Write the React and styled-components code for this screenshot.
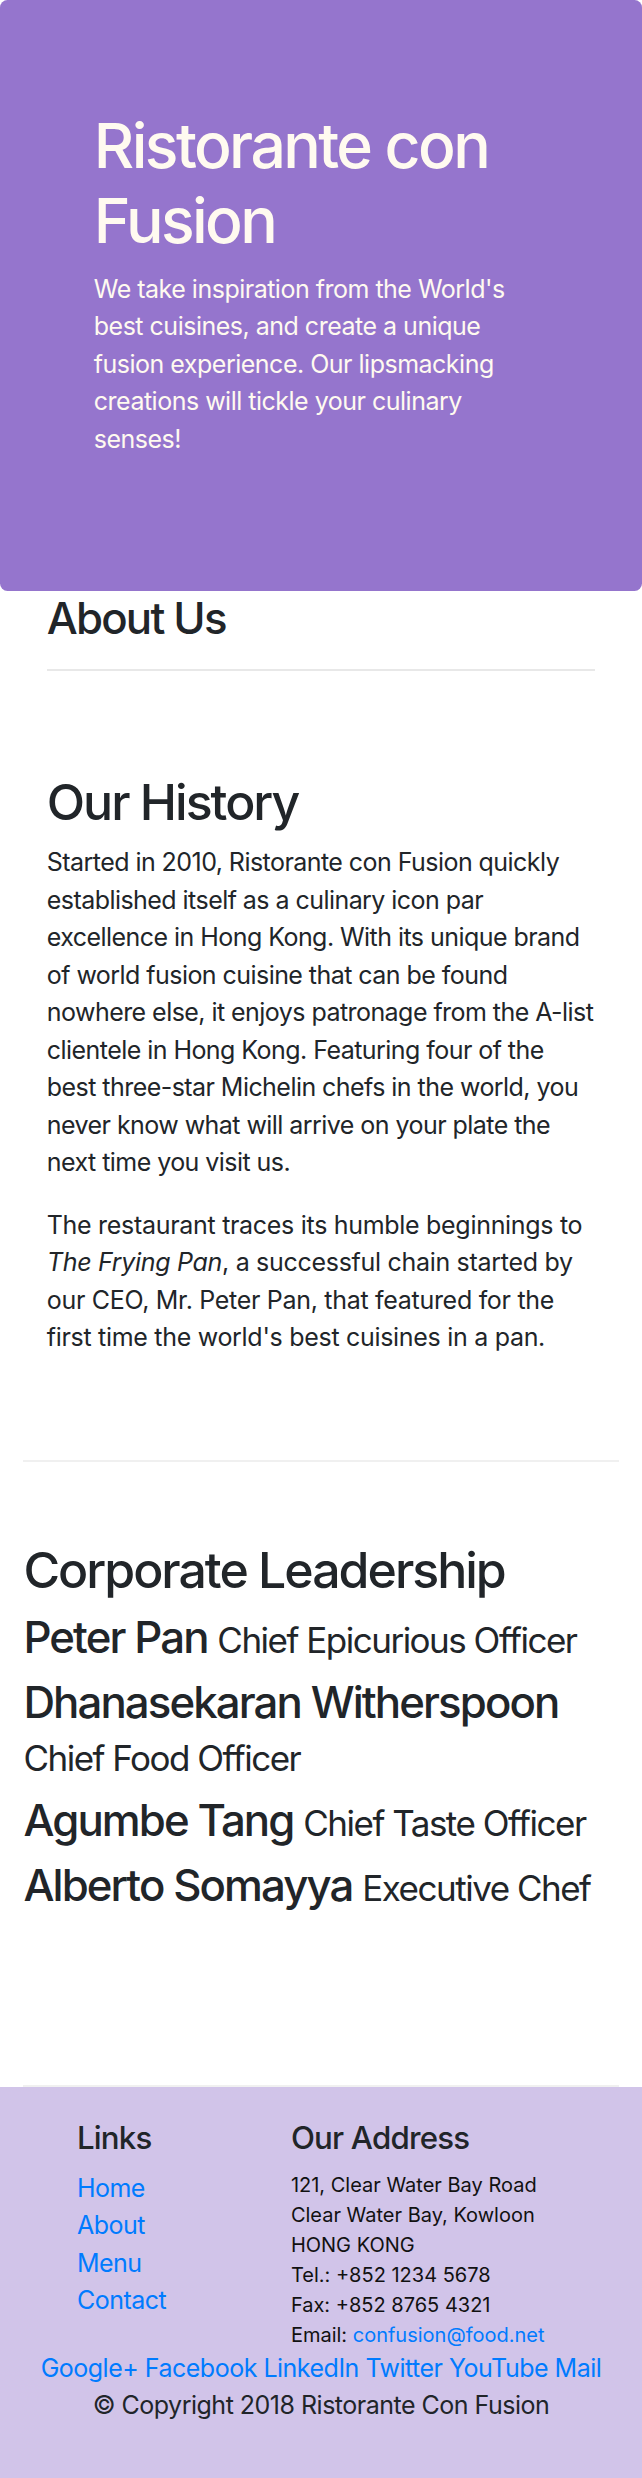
import React from 'react'
import styled, { createGlobalStyle } from 'styled-components'

const leaders = [
    { name: 'Peter Pan', designation: 'Chief Epicurious Officer' },
    { name: 'Dhanasekaran Witherspoon', designation: 'Chief Food Officer' },
    { name: 'Agumbe Tang', designation: 'Chief Taste Officer' },
    { name: 'Alberto Somayya', designation: 'Executive Chef' },
]

const socials = ['Google+', 'Facebook', 'LinkedIn', 'Twitter', 'YouTube', 'Mail']

function App() {
    return (
        <>
            <GlobalStyle />
            <Jumbotron>
                <Container>
                    <HeaderRow>
                        <Col>
                            <Title>Ristorante con Fusion</Title>
                            <Lead>
                                We take inspiration from the World's best cuisines, and create a unique
                                fusion experience. Our lipsmacking creations will tickle your culinary senses!
                            </Lead>
                        </Col>
                    </HeaderRow>
                </Container>
            </Jumbotron>

            <Container>
                <HeaderRow>
                    <Col>
                        <SectionTitle>About Us</SectionTitle>
                        <Rule />
                    </Col>
                </HeaderRow>

                <ContentRow>
                    <Col>
                        <Heading>Our History</Heading>
                        <Text $tracking={-0.55}>
                            Started in 2010, Ristorante con Fusion quickly established itself as a culinary
                            icon par excellence in Hong Kong. With its unique brand of world fusion cuisine
                            that can be found nowhere else, it enjoys patronage from the A-list clientele in
                            Hong Kong. Featuring four of the best three-star Michelin chefs in the world, you
                            never know what will arrive on your plate the next time you visit us.
                        </Text>
                        <Text $tracking={-0.3}>
                            The restaurant traces its humble beginnings to <em>The Frying Pan</em>, a successful
                            chain started by our CEO, Mr. Peter Pan, that featured for the first time the
                            world's best cuisines in a pan.
                        </Text>
                    </Col>
                </ContentRow>

                <ContentRow>
                    <Block>
                        <Heading>Corporate Leadership</Heading>
                        {leaders.map((leader) => (
                            <Leader key={leader.name}>
                                {leader.name} <small>{leader.designation}</small>
                            </Leader>
                        ))}
                    </Block>
                </ContentRow>
            </Container>

            <Footer>
                <Container>
                    <FooterRow>
                        <FooterCol $offset={8.3333} $width={33.3333}>
                            <FooterTitle>Links</FooterTitle>
                            <LinkList>
                                <li><Link href="#">Home</Link></li>
                                <li><Link href="#">About</Link></li>
                                <li><Link href="#">Menu</Link></li>
                                <li><Link href="#">Contact</Link></li>
                            </LinkList>
                        </FooterCol>
                        <FooterCol $width={58.3333}>
                            <FooterTitle>Our Address</FooterTitle>
                            <Address>
                                121, Clear Water Bay Road<br />
                                Clear Water Bay, Kowloon<br />
                                HONG KONG<br />
                                Tel.: +852 1234 5678<br />
                                Fax: +852 8765 4321<br />
                                Email: <Link href="#">confusion@food.net</Link>
                            </Address>
                        </FooterCol>
                        <FooterCol $width={100} $center>
                            {socials.map((s, i) => (
                                <React.Fragment key={s}>
                                    <Link href="#">{s}</Link>{i < socials.length - 1 ? ' ' : ''}
                                </React.Fragment>
                            ))}
                        </FooterCol>
                    </FooterRow>
                    <FooterRow>
                        <FooterCol $width={100} $center>
                            <Copyright>© Copyright 2018 Ristorante Con Fusion</Copyright>
                        </FooterCol>
                    </FooterRow>
                </Container>
            </Footer>
        </>
    )
}

export default App

const GlobalStyle = createGlobalStyle`
    *, *::before, *::after { box-sizing: border-box; }
    body {
        margin: 0;
        font-family: Inter, "Noto Sans", sans-serif;
        font-size: 25px;
        line-height: 1.5;
        letter-spacing: -0.5px;
        color: #212529;
        background: #fff;
    }
`

const Jumbotron = styled.header`
    background-color: #9575cd;
    color: floralwhite;
    padding: 108px 47px;
    border-radius: 7.5px;
`
const Container = styled.div`
    padding: 0 23.4px;
`
const HeaderRow = styled.div`
    display: flex;
    flex-wrap: wrap;
    margin: 0;
`
const Col = styled.div`
    flex: 0 0 100%;
    padding: 0 23.4px;
`
const Title = styled.h1`
    font-size: 62.5px;
    font-weight: 500;
    line-height: 1.2;
    letter-spacing: -2.6px;
    margin: 0 0 12.5px;
`
const Lead = styled.p`
    margin: 0 0 25px;
`
const SectionTitle = styled.h3`
    font-size: 43.75px;
    font-weight: 500;
    line-height: 1.2;
    letter-spacing: -1.8px;
    margin: 2px 0 12.5px;
`
const Rule = styled.hr`
    border: 0;
    border-top: 2px solid #e8e8e8;
    margin: 23px 0;
`
const ContentRow = styled.div`
    display: flex;
    flex-wrap: wrap;
    margin: 0;
    padding: 78px 0;
    border-bottom: 2px solid #f0f0f0;
    min-height: 625px;
`
const Block = styled.div`
    flex: 0 0 100%;
`
const Heading = styled.h2`
    font-size: 50px;
    font-weight: 500;
    line-height: 1.2;
    letter-spacing: -2px;
    margin: 0 0 12.5px;
`
const Text = styled.p`
    margin: 0 0 25px;
    letter-spacing: ${(p) => p.$tracking}px;
`
const Leader = styled.h3`
    font-size: 43.75px;
    font-weight: 500;
    line-height: 1.2;
    letter-spacing: -1.9px;
    margin: 0 0 12.5px;

    > small {
        font-size: 80%;
        font-weight: 400;
        letter-spacing: -1.5px;
    }
`
const Footer = styled.footer`
    background-color: #d1c4e9;
    padding: 33px 0 32px;
`
const FooterRow = styled.div`
    display: flex;
    flex-wrap: wrap;
    justify-content: center;
    margin: 0 -23.4px;
`
const FooterCol = styled.div`
    flex: 0 0 ${(p) => p.$width}%;
    max-width: ${(p) => p.$width}%;
    margin-left: ${(p) => p.$offset || 0}%;
    padding: 0 23.4px;
    text-align: ${(p) => (p.$center ? 'center' : 'left')};
`
const FooterTitle = styled.h5`
    font-size: 31.25px;
    font-weight: 500;
    line-height: 1.2;
    letter-spacing: -0.8px;
    margin: 0 0 12.5px;
`
const LinkList = styled.ul`
    list-style: none;
    padding: 0;
    margin: 0 0 25px;
`
const Link = styled.a`
    color: #007bff;
    text-decoration: none;
`
const Address = styled.address`
    font-style: normal;
    font-size: 20px;
    line-height: 30px;
    letter-spacing: 0;
    color: #111;
    margin: 0;
`
const Copyright = styled.p`
    margin: 0 0 25px;
`
